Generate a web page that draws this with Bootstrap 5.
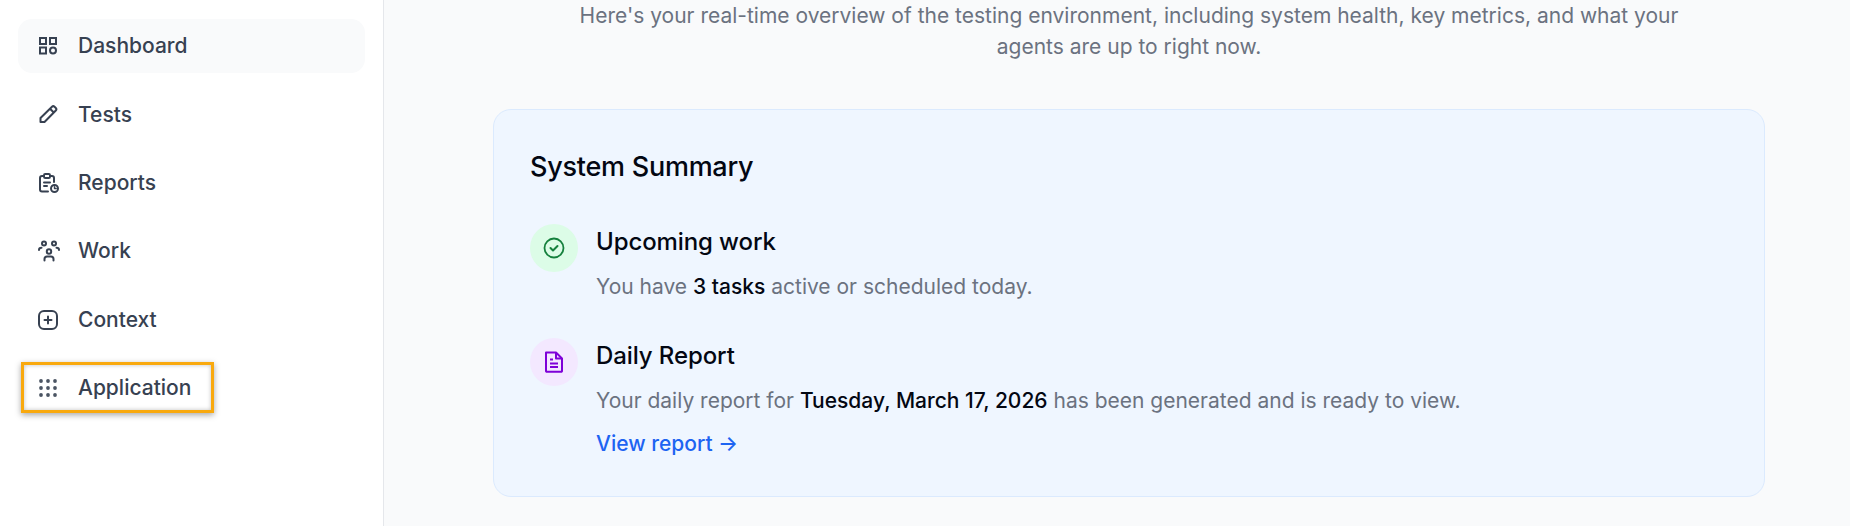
<!DOCTYPE html>
<html lang="en">
<head>
  <meta charset="UTF-8" />
  <meta name="viewport" content="width=device-width, initial-scale=1" />
  <title>Dashboard</title>
  <link href="https://cdn.jsdelivr.net/npm/bootstrap@5.3.0/dist/css/bootstrap.min.css" rel="stylesheet" />
  <style>
    html, body { height: 526px; overflow: hidden; }
    body { font-family: Inter, "Liberation Sans", sans-serif; font-size: 21px; background: #f9fafb; }
    .side-panel { width: 384px; height: 526px; background: #fff; border-right: 1px solid #e5e7eb; padding: 19px 18px 0; flex-shrink: 0; }
    .side-item { height: 54px; margin-bottom: 14.4px; padding-left: 21px; gap: 19px; color: #374151; font-weight: 500; font-size: 21px; text-decoration: none; border-radius: 14px; position: relative; }
    .side-item:hover { color: #374151; }
    .side-item.active-item { background: #f9fafb; }
    .side-item svg { width: 20px; height: 20px; flex-shrink: 0; overflow: visible; }
    .callout-box { position: absolute; left: 3px; top: 1px; width: 193px; height: 51px; border: 3px solid #f9a90e; box-shadow: 0 2px 6px rgba(0,0,0,.35), inset 0 0 4px rgba(0,0,0,.25); pointer-events: none; }
    .main-area { width: 1490px; flex-shrink: 0; }
    .intro-text { width: 1152px; margin: 0 auto 47px; color: #6b7280; font-size: 21px; line-height: 31px; text-align: center; }
    .summary-box { width: 1272px; height: 388px; margin: 0 auto; background: #eff6ff; border: 1px solid #dbeafe; border-radius: 18px; padding: 36px; }
    .summary-title { font-size: 27px; font-weight: 500; letter-spacing: -.25px; line-height: 42px; margin: 0 0 36px; color: #030712; }
    .icon-disc { width: 48px; height: 48px; flex-shrink: 0; }
    .disc-green { background: #dcfce7; color: #15803d; }
    .disc-purple { background: #f3e8ff; color: #7e00d8; }
    .summary-row { gap: 18px; margin-bottom: 33px; }
    .row-title { font-size: 24px; font-weight: 500; letter-spacing: -.1px; line-height: 36px; margin: 0 0 9px; color: #030712; }
    .row-text { color: #6b7280; line-height: 36px; margin: 0; }
    .row-text strong { color: #030712; font-weight: 500; }
    .row-link { color: #1d64f2; font-weight: 500; line-height: 36px; text-decoration: none; display: block; margin-top: 7px; }
  </style>
</head>
<body>
  <div class="d-flex">
    <!-- Sidebar -->
    <nav class="side-panel">
      <a href="#" class="side-item active-item d-flex align-items-center">
        <svg viewBox="0 0 20 20" fill="none" stroke="#374151" stroke-width="2"><rect x="1" y="2" width="6" height="6"/><rect x="11" y="2" width="6" height="6"/><rect x="1" y="11.500" width="6" height="6"/><circle cx="14" cy="14.500" r="3"/></svg>
        Dashboard
      </a>
      <a href="#" class="side-item d-flex align-items-center">
        <svg viewBox="0 0 20 20" fill="none" stroke="#374151" stroke-width="2" stroke-linejoin="round"><path d="M1.500 18v-4L13 2.700a1.800 1.800 0 0 1 2.500 0l1.300 1.300a1.800 1.800 0 0 1 0 2.500L5.500 18z"/><path d="M11 4.700l3.800 3.800"/></svg>
        Tests
      </a>
      <a href="#" class="side-item d-flex align-items-center">
        <svg viewBox="0 0 20 20" fill="none" stroke="#374151" stroke-width="2" stroke-linecap="round" stroke-linejoin="round"><path d="M9 18.500H3a2 2 0 0 1-2-2V5a2 2 0 0 1 2-2h1M12 3h1a2 2 0 0 1 2 2v4"/><rect x="5" y="1" width="6" height="4" rx="1.200"/><path d="M5 9.500h6M5 13h3"/><circle cx="15.500" cy="15.500" r="3.500"/><path d="M15.500 13.800v1.700h1.700" stroke-width="1.400"/></svg>
        Reports
      </a>
      <a href="#" class="side-item d-flex align-items-center">
        <svg viewBox="0 0 20 20" fill="none" stroke="#374151" stroke-width="2" stroke-linecap="round" stroke-linejoin="round"><circle cx="5" cy="2.500" r="2"/><circle cx="15" cy="2.500" r="2"/><circle cx="10" cy="10.500" r="2.200"/><path d="M0 9c0-1.300 1-2.200 2.500-2.200M20 9c0-1.300-1-2.200-2.500-2.200M5.500 19.500v-1.500c0-1.500 1-2.500 2.500-2.500h4c1.500 0 2.500 1 2.500 2.500v1.500"/></svg>
        Work
      </a>
      <a href="#" class="side-item d-flex align-items-center">
        <svg viewBox="0 0 20 20" fill="none" stroke="#374151" stroke-width="2" stroke-linecap="round"><rect x="0" y="1" width="18" height="18" rx="5"/><path d="M9 6.500v7M5.500 10h7"/></svg>
        Context
      </a>
      <a href="#" class="side-item d-flex align-items-center">
        <svg viewBox="0 0 20 20" fill="#4b5563"><circle cx="2" cy="3" r="1.900"/><circle cx="9" cy="3" r="1.900"/><circle cx="16" cy="3" r="1.900"/><circle cx="2" cy="10" r="1.900"/><circle cx="9" cy="10" r="1.900"/><circle cx="16" cy="10" r="1.900"/><circle cx="2" cy="17" r="1.900"/><circle cx="9" cy="17" r="1.900"/><circle cx="16" cy="17" r="1.900"/></svg>
        Application
        <span class="callout-box"></span>
      </a>
    </nav>

    <!-- Main -->
    <main class="main-area">
      <p class="intro-text">Here's your real-time overview of the testing environment, including system health, key metrics, and what your agents are up to right now.</p>
      <section class="summary-box">
        <h2 class="summary-title">System Summary</h2>
        <div class="summary-row d-flex">
          <div class="icon-disc disc-green rounded-circle d-flex align-items-center justify-content-center">
            <svg width="22" height="22" viewBox="0 0 22 22" fill="none" stroke="currentColor" stroke-linecap="round" stroke-linejoin="round"><circle cx="11" cy="11" r="9.500" stroke-width="1.800"/><path d="M7.500 11l2.500 2.500 4.500-4.500" stroke-width="2"/></svg>
          </div>
          <div>
            <h3 class="row-title">Upcoming work</h3>
            <p class="row-text">You have <strong>3 tasks</strong> active or scheduled today.</p>
          </div>
        </div>
        <div class="summary-row d-flex">
          <div class="icon-disc disc-purple rounded-circle d-flex align-items-center justify-content-center">
            <svg width="22" height="22" viewBox="0 0 22 22" fill="none" stroke="currentColor" stroke-width="2" stroke-linejoin="round"><path d="M3 1.500h10l6 6V20a.8.8 0 0 1-.8.8H3.800A.8.8 0 0 1 3 20z"/><path d="M13 1.500v6h6M7 8.500h3M7 12.500h8M7 16h8"/></svg>
          </div>
          <div>
            <h3 class="row-title">Daily Report</h3>
            <p class="row-text">Your daily report for <strong>Tuesday, March 17, 2026</strong> has been generated and is ready to view.</p>
            <a href="#" class="row-link">View report →</a>
          </div>
        </div>
      </section>
    </main>
  </div>
  <script src="https://cdn.jsdelivr.net/npm/bootstrap@5.3.0/dist/js/bootstrap.bundle.min.js"></script>
</body>
</html>
